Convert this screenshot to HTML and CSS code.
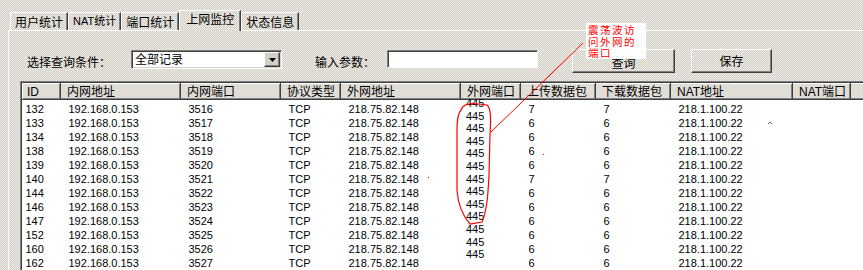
FILE: index.html
```html
<!DOCTYPE html>
<html lang="zh-CN">
<head>
  <meta charset="UTF-8" />
  <title>上网监控</title>
  <link rel="stylesheet" href="styles.css">
</head>
<body>

  <!-- 标签页 -->
  <div class="tabs">
    <span class="tab">用户统计</span>
    <span class="tab">NAT统计</span>
    <span class="tab">端口统计</span>
    <span class="tab active">上网监控</span>
    <span class="tab">状态信息</span>
  </div>

  <div class="panel">
    <!-- 查询条件 -->
    <div class="query-bar">
      <label class="lbl-cond">选择查询条件：</label>
      <div class="select">
        <span class="select-text">全部记录</span>
        <span class="drop"><svg width="7" height="4" viewBox="0 0 7 4"><path d="M0 0h7L3.5 4z" fill="#000"/></svg></span>
      </div>
      <label class="lbl-param">输入参数：</label>
      <div class="input"></div>
      <button class="btn btn-query">查询</button>
      <button class="btn btn-save">保存</button>
    </div>

    <!-- 记录列表 -->
    <div class="grid-wrap">
      <table class="grid">
        <colgroup>
          <col style="width:38px"><col style="width:120px"><col style="width:100px">
          <col style="width:60px"><col style="width:120px"><col style="width:60px">
          <col style="width:75px"><col style="width:75px"><col style="width:122px">
          <col style="width:58px"><col style="width:30px">
        </colgroup>
        <thead>
          <tr>
            <th class="c-id">ID</th><th>内网地址</th><th>内网端口</th><th>协议类型</th>
            <th>外网地址</th><th>外网端口</th><th>上传数据包</th><th>下载数据包</th>
            <th>NAT地址</th><th>NAT端口</th><th></th>
          </tr>
        </thead>
        <tbody id="rows"></tbody>
      </table>
      <div class="port-stack">445<br>445<br>445<br>445<br>445<br>445<br>445<br>445<br>445<br>445<br>445<br>445<br>445</div>
    </div>
  </div>

  <!-- 标注 -->
  <div class="note">
    <div>震荡波访</div>
    <div>问外网的</div>
    <div>端口</div>
  </div>
  <svg class="marks" width="863" height="270" viewBox="0 0 863 270">
    <path d="M461 110 C463 104 470 103 478 104 L487 105 C491 108 491 118 490 135 L489 175 C488 195 487 210 482 222 L470 224 C462 215 458 205 457 190 L457 130 C457 118 459 112 461 110 Z" fill="none" stroke="#f00" stroke-width="1.2"/>
    <path d="M491 132 L583 43" stroke="#f00" stroke-width="1"/>
    <rect x="428" y="177" width="1" height="1" fill="#f00"/>
    <rect x="543" y="154" width="1" height="1" fill="#f00"/>
    <path d="M768 124 l2 -2 l2 2" fill="none" stroke="#333" stroke-width="0.8"/>
  </svg>

  <script>
    var ids = [132, 133, 134, 138, 139, 140, 144, 146, 147, 152, 160, 162];
    var up = [7, 6, 6, 6, 6, 7, 6, 6, 6, 6, 6, 6];
    var html = '';
    ids.forEach(function (id, i) {
      html += '<tr>' +
        '<td class="c-id">' + id + '</td>' +
        '<td>192.168.0.153</td>' +
        '<td>' + (3516 + i) + '</td>' +
        '<td>TCP</td>' +
        '<td>218.75.82.148</td>' +
        '<td></td>' +
        '<td>' + up[i] + '</td>' +
        '<td>' + up[i] + '</td>' +
        '<td>218.1.100.22</td>' +
        '<td></td><td></td>' +
        '</tr>';
    });
    document.getElementById('rows').innerHTML = html;
  </script>

</body>
</html>
```

FILE: styles.css
```css
* {
  margin: 0;
  padding: 0;
  box-sizing: border-box;
}

body {
  position: relative;
  width: 863px;
  height: 270px;
  overflow: hidden;
  font-family: "Liberation Sans", "Noto Sans CJK SC", sans-serif;
  font-size: 12px;
  color: #000;
  background: repeating-conic-gradient(#d2cec6 0% 25%, #eeece7 0% 50%) 0 0 / 2px 2px;
}

/* 标签页 */
.tabs {
  display: flex;
  align-items: flex-end;
  height: 30px;
  padding-left: 10px;
}

.tab {
  height: 18px;
  line-height: 17px;
  padding: 0 4px;
  border-top: 1px solid #fff;
  border-left: 1px solid #fff;
  border-right: 1px solid #404040;
  box-shadow: inset -1px 0 #808080;
  font-family: "Noto Sans CJK SC", sans-serif;
  font-size: 12px;
  white-space: nowrap;
}

.tab:nth-child(2) {
  font-family: "Liberation Sans", "Noto Sans CJK SC", sans-serif;
  font-size: 11px;
}

.tab.active {
  height: 21px;
  line-height: 16px;
  padding: 0 6px;
  margin-bottom: -1px;
  position: relative;
  z-index: 1;
  background: repeating-conic-gradient(#d2cec6 0% 25%, #eeece7 0% 50%) 0 0 / 2px 2px;
}

.panel {
  margin-left: 8px;
  border-top: 1px solid #fff;
  border-left: 1px solid #fff;
  height: 240px;
}

/* 查询条件 */
.query-bar {
  display: flex;
  align-items: flex-start;
  height: 24px;
  margin-top: 18px;
  font-family: "Noto Sans CJK SC", sans-serif;
}

.query-bar label {
  line-height: 25px;
  width: 84px;
  white-space: nowrap;
}

.lbl-cond {
  margin-left: 18px;
}

.lbl-param {
  margin-left: 33px;
  width: 60px !important;
}

.select {
  display: flex;
  margin-left: 20px;
  margin-top: 1px;
  width: 151px;
  height: 19px;
  background: #fff;
  border-top: 1px solid #808080;
  border-left: 1px solid #808080;
  border-right: 1px solid #fff;
  border-bottom: 1px solid #fff;
  box-shadow: inset 1px 1px #404040, inset -1px -1px #d4d0c8;
}

.select-text {
  flex: 1;
  padding-left: 3px;
  line-height: 15px;
}

.drop {
  display: flex;
  align-items: center;
  justify-content: center;
  width: 16px;
  height: 15px;
  margin: 1px 1px 1px 0;
  background: #d4d0c8;
  border-top: 1px solid #fff;
  border-left: 1px solid #fff;
  border-right: 1px solid #404040;
  border-bottom: 1px solid #404040;
  box-shadow: inset -1px -1px #808080;
}

.input {
  margin-left: 12px;
  margin-top: 1px;
  width: 151px;
  height: 18px;
  background: #fff;
  border-top: 1px solid #808080;
  border-left: 1px solid #808080;
  border-right: 1px solid #fff;
  border-bottom: 1px solid #fff;
  box-shadow: inset 1px 1px #404040;
}

.btn {
  height: 24px;
  font-family: "Noto Sans CJK SC", sans-serif;
  font-size: 12px;
  line-height: 20px;
  color: #000;
  background: transparent;
  border-top: 1px solid #fff;
  border-left: 1px solid #fff;
  border-right: 1px solid #404040;
  border-bottom: 1px solid #404040;
  box-shadow: inset -1px -1px #808080;
}

.btn-query {
  margin-left: 34px;
  width: 103px;
  padding-top: 3px;
}

.btn-save {
  margin-left: 16px;
  width: 81px;
}

/* 记录列表 */
.grid-wrap {
  position: relative;
  margin-top: 8px;
  margin-left: 11px;
  width: 860px;
  height: 200px;
  overflow: hidden;
  background: #fff;
  border-top: 1px solid #808080;
  border-left: 1px solid #808080;
  box-shadow: inset 1px 1px #404040;
  padding: 1px 0 0 1px;
}

.grid {
  border-collapse: collapse;
  table-layout: fixed;
  width: 858px;
}

.grid th {
  height: 16px;
  padding-left: 6px;
  text-align: left;
  font-weight: normal;
  font-family: "Liberation Sans", "Noto Sans CJK SC", sans-serif;
  font-size: 12px;
  line-height: 14px;
  white-space: nowrap;
  overflow: hidden;
  background: repeating-conic-gradient(#d2cec6 0% 25%, #eeece7 0% 50%) 0 0 / 2px 2px;
  border-top: 1px solid #fff;
  border-left: 1px solid #fff;
  border-right: 1px solid #404040;
  border-bottom: 1px solid #404040;
  box-shadow: inset -1px -1px #808080;
}

.grid th.c-id {
  padding-left: 4px;
}

.grid td {
  height: 14px;
  padding-left: 8px;
  font-size: 11px;
  line-height: 14px;
  white-space: nowrap;
}

.grid td.c-id {
  padding-left: 3px;
}

.grid tbody tr:first-child td {
  height: 16px;
  padding-top: 2px;
}

.port-stack {
  position: absolute;
  left: 445px;
  top: 15px;
  font-size: 11px;
  line-height: 12.6px;
}

/* 标注 */
.note {
  position: absolute;
  left: 586px;
  top: 23px;
  width: 60px;
  height: 36px;
  padding: 2px 0 0 2px;
  background: #fff;
  color: #f00;
  font-family: "Liberation Sans", "Noto Sans CJK SC", sans-serif;
  font-size: 10.5px;
  letter-spacing: 1.5px;
  line-height: 11.5px;
}

.marks {
  position: absolute;
  left: 0;
  top: 0;
  pointer-events: none;
}
```
